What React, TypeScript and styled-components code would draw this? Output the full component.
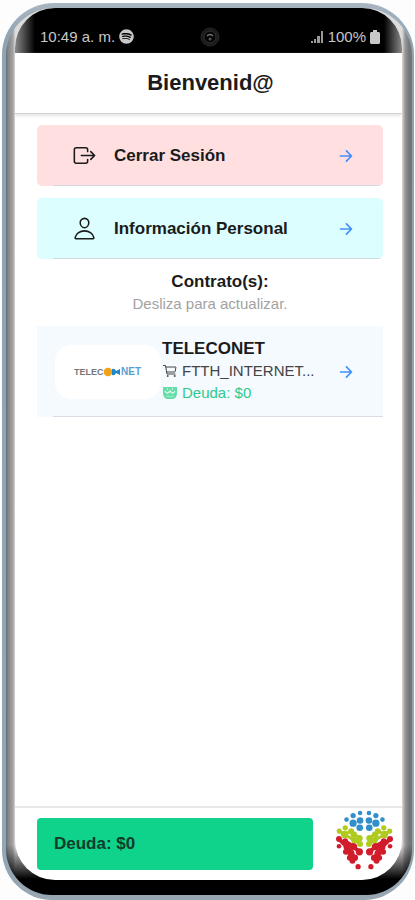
import React from 'react';
import styled, { createGlobalStyle } from 'styled-components';
import { IoArrowForward, IoCartOutline, IoExitOutline, IoPersonOutline } from 'react-icons/io5';
import { FaSpotify } from 'react-icons/fa';

const GlobalStyle = createGlobalStyle`
  * { box-sizing: border-box; }
  body {
    margin: 0;
    background: #fdfdfd;
    color: #1b1b1b;
    font-family: "Liberation Sans", Arial, sans-serif;
  }
  h1, h2, p { margin: 0; }
  svg { display: block; flex-shrink: 0; }
`;

const Phone = styled.div`
  height: 100vh;
  min-height: 600px;
  margin: 0 1px 0 2px;
  padding-top: 3px;
  display: flex;
`;

const Frame = styled.div`
  flex: 1;
  min-width: 0;
  display: flex;
  padding: 5px 2px 5px 4px;
  border-radius: 52px 52px 50px 50px;
  background: linear-gradient(#a9b5c0, #8fa3b3 4%, #93a6b4 96%, #98a6b1);
`;

const Bezel = styled.div`
  flex: 1;
  min-width: 0;
  display: flex;
  padding: 0 10px 15px 9px;
  border-radius: 48px 48px 46px 46px;
  background:
    linear-gradient(#0000 calc(100% - 50px), #000 calc(100% - 16px)),
    linear-gradient(90deg, #67717a, #8b8b8b 3px, #a4a4a4 7px, #d6d6d6 9px, #0000 9px),
    linear-gradient(270deg, #70757b, #777 3px, #999 7px, #dcdcdc 10px);
`;

const Screen = styled.div`
  flex: 1;
  min-width: 0;
  display: flex;
  flex-direction: column;
  overflow: hidden;
  border-radius: 40px;
  background: #fff;
`;

const StatusBar = styled.header`
  display: grid;
  grid-template-columns: 1fr auto 1fr;
  align-items: center;
  height: 45px;
  flex-shrink: 0;
  padding: 12px 22px 0 25px;
  color: #c8c8c8;
  font-size: 15px;
  background: linear-gradient(90deg, #8a8a8a, #000 20px, #000 calc(100% - 18px), #8a8a8a);
`;

const StatusGroup = styled.div<{ $end?: boolean }>`
  display: flex;
  align-items: center;
  gap: 4px;
  white-space: nowrap;
  justify-content: ${(p) => (p.$end ? 'flex-end' : 'flex-start')};
`;

const TitleBar = styled.div`
  display: flex;
  align-items: center;
  justify-content: center;
  height: 61px;
  flex-shrink: 0;
  padding-left: 4px;
  border-bottom: 1px solid #d4d4d4;
  box-shadow: 0 2px 3px #e6e6e6;
`;

const Title = styled.h1`
  font-size: 22px;
  line-height: 28px;
  font-weight: 700;
`;

const Content = styled.main`
  flex: 1;
  min-height: 0;
  padding: 11px 19px 0 22px;
`;

const ActionRow = styled.button<{ $tone: string }>`
  display: flex;
  align-items: center;
  width: 100%;
  height: 61px;
  margin-bottom: 12px;
  padding: 0 28px 0 35px;
  border: 0;
  border-radius: 5px;
  background:
    linear-gradient(#d0d8e0, #d0d8e0) 16px 100% / 100% 1px no-repeat,
    ${(p) => p.$tone};
  color: inherit;
  font: inherit;
  text-align: left;
  cursor: pointer;
`;

const ActionLabel = styled.span`
  flex: 1;
  margin-left: 17px;
  font-size: 17px;
  font-weight: 700;
`;

const Contracts = styled.section`
  text-align: center;
`;

const Heading = styled.h2`
  padding-left: 20px;
  font-size: 17px;
  line-height: 22px;
  font-weight: 700;
`;

const Hint = styled.p`
  font-size: 15px;
  line-height: 22px;
  color: #a2a2a2;
`;

const ContractCard = styled.button`
  display: flex;
  align-items: center;
  width: 100%;
  height: 91px;
  margin-top: 11px;
  padding: 0 28px 0 18px;
  border: 0;
  background:
    linear-gradient(#d9dee4, #d9dee4) 16px 100% / 100% 1px no-repeat,
    #f5fafe;
  color: inherit;
  font: inherit;
  text-align: left;
  cursor: pointer;
`;

const LogoBox = styled.span`
  display: flex;
  align-items: center;
  justify-content: center;
  width: 106px;
  height: 54px;
  flex-shrink: 0;
  border-radius: 16px;
  background: #fff;
`;

const ContractInfo = styled.span`
  display: flex;
  flex-direction: column;
  flex: 1;
  min-width: 0;
  padding: 0 8px 2px 1px;
`;

const ContractName = styled.span`
  font-size: 17px;
  line-height: 22px;
  font-weight: 700;
`;

const Detail = styled.span<{ $good?: boolean }>`
  display: flex;
  align-items: center;
  gap: 4px;
  font-size: 15px;
  line-height: 22px;
  white-space: nowrap;
  color: ${(p) => (p.$good ? '#2fc98b' : '#444')};
`;

const Footer = styled.footer`
  display: flex;
  align-items: center;
  gap: 23px;
  flex-shrink: 0;
  height: 74px;
  padding: 0 9px 0 22px;
  border-top: 2px solid #e8e8e8;
`;

const DebtButton = styled.button`
  flex: 1;
  height: 52px;
  padding: 0 17px;
  border: 0;
  border-radius: 4px;
  background: #0fd28b;
  color: #103c2b;
  font-family: inherit;
  font-size: 17px;
  font-weight: 700;
  text-align: left;
  cursor: pointer;
`;

const FooterLogo = styled.div`
  align-self: flex-start;
  padding-top: 2px;
`;

const Camera = () => (
  <svg width="20" height="20" viewBox="0 0 20 20" aria-hidden="true">
    <circle cx="10" cy="10" r="9" fill="#1b1b1b" stroke="#262626" />
    <circle cx="10" cy="10" r="6" fill="#050505" stroke="#333" />
    <path d="M7 9q3-3 6 0" stroke="#777" strokeWidth="1.5" fill="none" />
    <circle cx="10" cy="12" r="1.5" fill="#555" />
  </svg>
);

const Signal = () => (
  <svg width="13" height="14" viewBox="0 0 13 14" fill="#999" aria-hidden="true">
    <path d="M0 11h2v2H0zM3 9h2v4H3zM6 6h3v7H6zM10 1h2v12h-2z" />
  </svg>
);

const Battery = () => (
  <svg width="10" height="14" viewBox="0 0 10 14" fill="#c8c8c8" aria-hidden="true">
    <path d="M3 0h4v2h2l1 1v10l-1 1H1l-1-1V3l1-1h2z" />
  </svg>
);

const Cash = () => (
  <svg width="16" height="14" viewBox="0 0 16 14" aria-hidden="true">
    <path d="M1 1h14v6q0 5-4 6H5q-4-1-4-6z" fill="#66dda9" />
    <path d="M3 5q2 4 5 0q3 4 5 0" fill="none" stroke="#d9f8eb" strokeWidth="1.3" />
    <path d="M5 3h1M10 3h1" stroke="#d9f8eb" strokeWidth="1.5" />
    <path d="M4 10q4 1 8 0" fill="none" stroke="#a5ebcd" />
  </svg>
);

const BrandText = styled.text<{ $size: number }>`
  font-family: "Liberation Sans", Arial, sans-serif;
  font-size: ${(p) => p.$size}px;
  font-weight: 700;
`;

const TeleconetLogo = () => (
  <svg width="68" height="14" viewBox="0 0 68 14" role="img" aria-label="Teleconet">
    <BrandText $size={9} x="0" y="10" fill="#777">TELEC</BrandText>
    <circle cx="34" cy="7" r="4.300" fill="#f3a11b" />
    <path d="M38 4q3-1 4 2l4-2v6l-4-2q-1 3-4 2z" fill="#2387c7" />
    <BrandText $size={10} x="47" y="10" fill="#5b9fd0">NET</BrandText>
  </svg>
);

const blueDots = [[93, 22, 7], [72, 30, 8], [52, 42, 7], [72, 53, 11], [93, 45, 10], [92, 67, 10]];
const greenDots = [[48, 67, 8], [30, 77, 8], [46, 87, 11], [66, 77, 9], [74, 88, 10], [91, 99, 10], [75, 105, 9], [93, 116, 9]];
const redDots = [[29, 101, 9], [48, 108, 9], [29, 123, 7], [53, 125, 10], [73, 124, 11], [91, 140, 11], [50, 140, 9], [66, 144, 10], [62, 158, 9], [77, 158, 10], [70, 167, 9], [87, 185, 8]];

const Dots = () => (
  <>
    <g fill="#318fc9">{blueDots.map(([x, y, r]) => <circle key={`${x}-${y}`} cx={x} cy={y} r={r} />)}</g>
    <g fill="#b0ca20">
      {greenDots.map(([x, y, r]) => <circle key={`${x}-${y}`} cx={x} cy={y} r={r} />)}
      <path d="M30 77L46 87M66 77L46 87L75 105L93 116M66 77L91 99" fill="none" stroke="#b0ca20" strokeWidth="9" />
    </g>
    <g fill="#d11c2b">
      {redDots.map(([x, y, r]) => <circle key={`${x}-${y}`} cx={x} cy={y} r={r} />)}
      <path d="M29 101L53 125L70 144M48 108L73 124L91 140M50 140L66 144L77 158" fill="none" stroke="#d11c2b" strokeWidth="12" />
    </g>
  </>
);

const DotLogo = () => (
  <svg width="57" height="60" viewBox="20 14 173 180" role="img" aria-label="Logo">
    <Dots />
    <g transform="translate(213 0) scale(-1 1)"><Dots /></g>
  </svg>
);

const Arrow = () => <IoArrowForward size={18} color="#4490fb" aria-hidden="true" />;

export default function App() {
  return (
    <>
      <GlobalStyle />
      <Phone>
        <Frame>
          <Bezel>
            <Screen>
              <StatusBar>
                <StatusGroup>10:49 a. m. <FaSpotify size={15} aria-hidden="true" /></StatusGroup>
                <Camera />
                <StatusGroup $end><Signal />100%<Battery /></StatusGroup>
              </StatusBar>
              <TitleBar><Title>Bienvenid@</Title></TitleBar>
              <Content>
                <ActionRow type="button" $tone="#ffdfe0">
                  <IoExitOutline size={25} aria-hidden="true" />
                  <ActionLabel>Cerrar Sesión</ActionLabel>
                  <Arrow />
                </ActionRow>
                <ActionRow type="button" $tone="#dcfeff">
                  <IoPersonOutline size={25} aria-hidden="true" />
                  <ActionLabel>Información Personal</ActionLabel>
                  <Arrow />
                </ActionRow>
                <Contracts>
                  <Heading>Contrato(s):</Heading>
                  <Hint>Desliza para actualizar.</Hint>
                  <ContractCard type="button">
                    <LogoBox><TeleconetLogo /></LogoBox>
                    <ContractInfo>
                      <ContractName>TELECONET</ContractName>
                      <Detail><IoCartOutline size={16} aria-hidden="true" />FTTH_INTERNET...</Detail>
                      <Detail $good><Cash />Deuda: $0</Detail>
                    </ContractInfo>
                    <Arrow />
                  </ContractCard>
                </Contracts>
              </Content>
              <Footer>
                <DebtButton type="button">Deuda: $0</DebtButton>
                <FooterLogo><DotLogo /></FooterLogo>
              </Footer>
            </Screen>
          </Bezel>
        </Frame>
      </Phone>
    </>
  );
}
